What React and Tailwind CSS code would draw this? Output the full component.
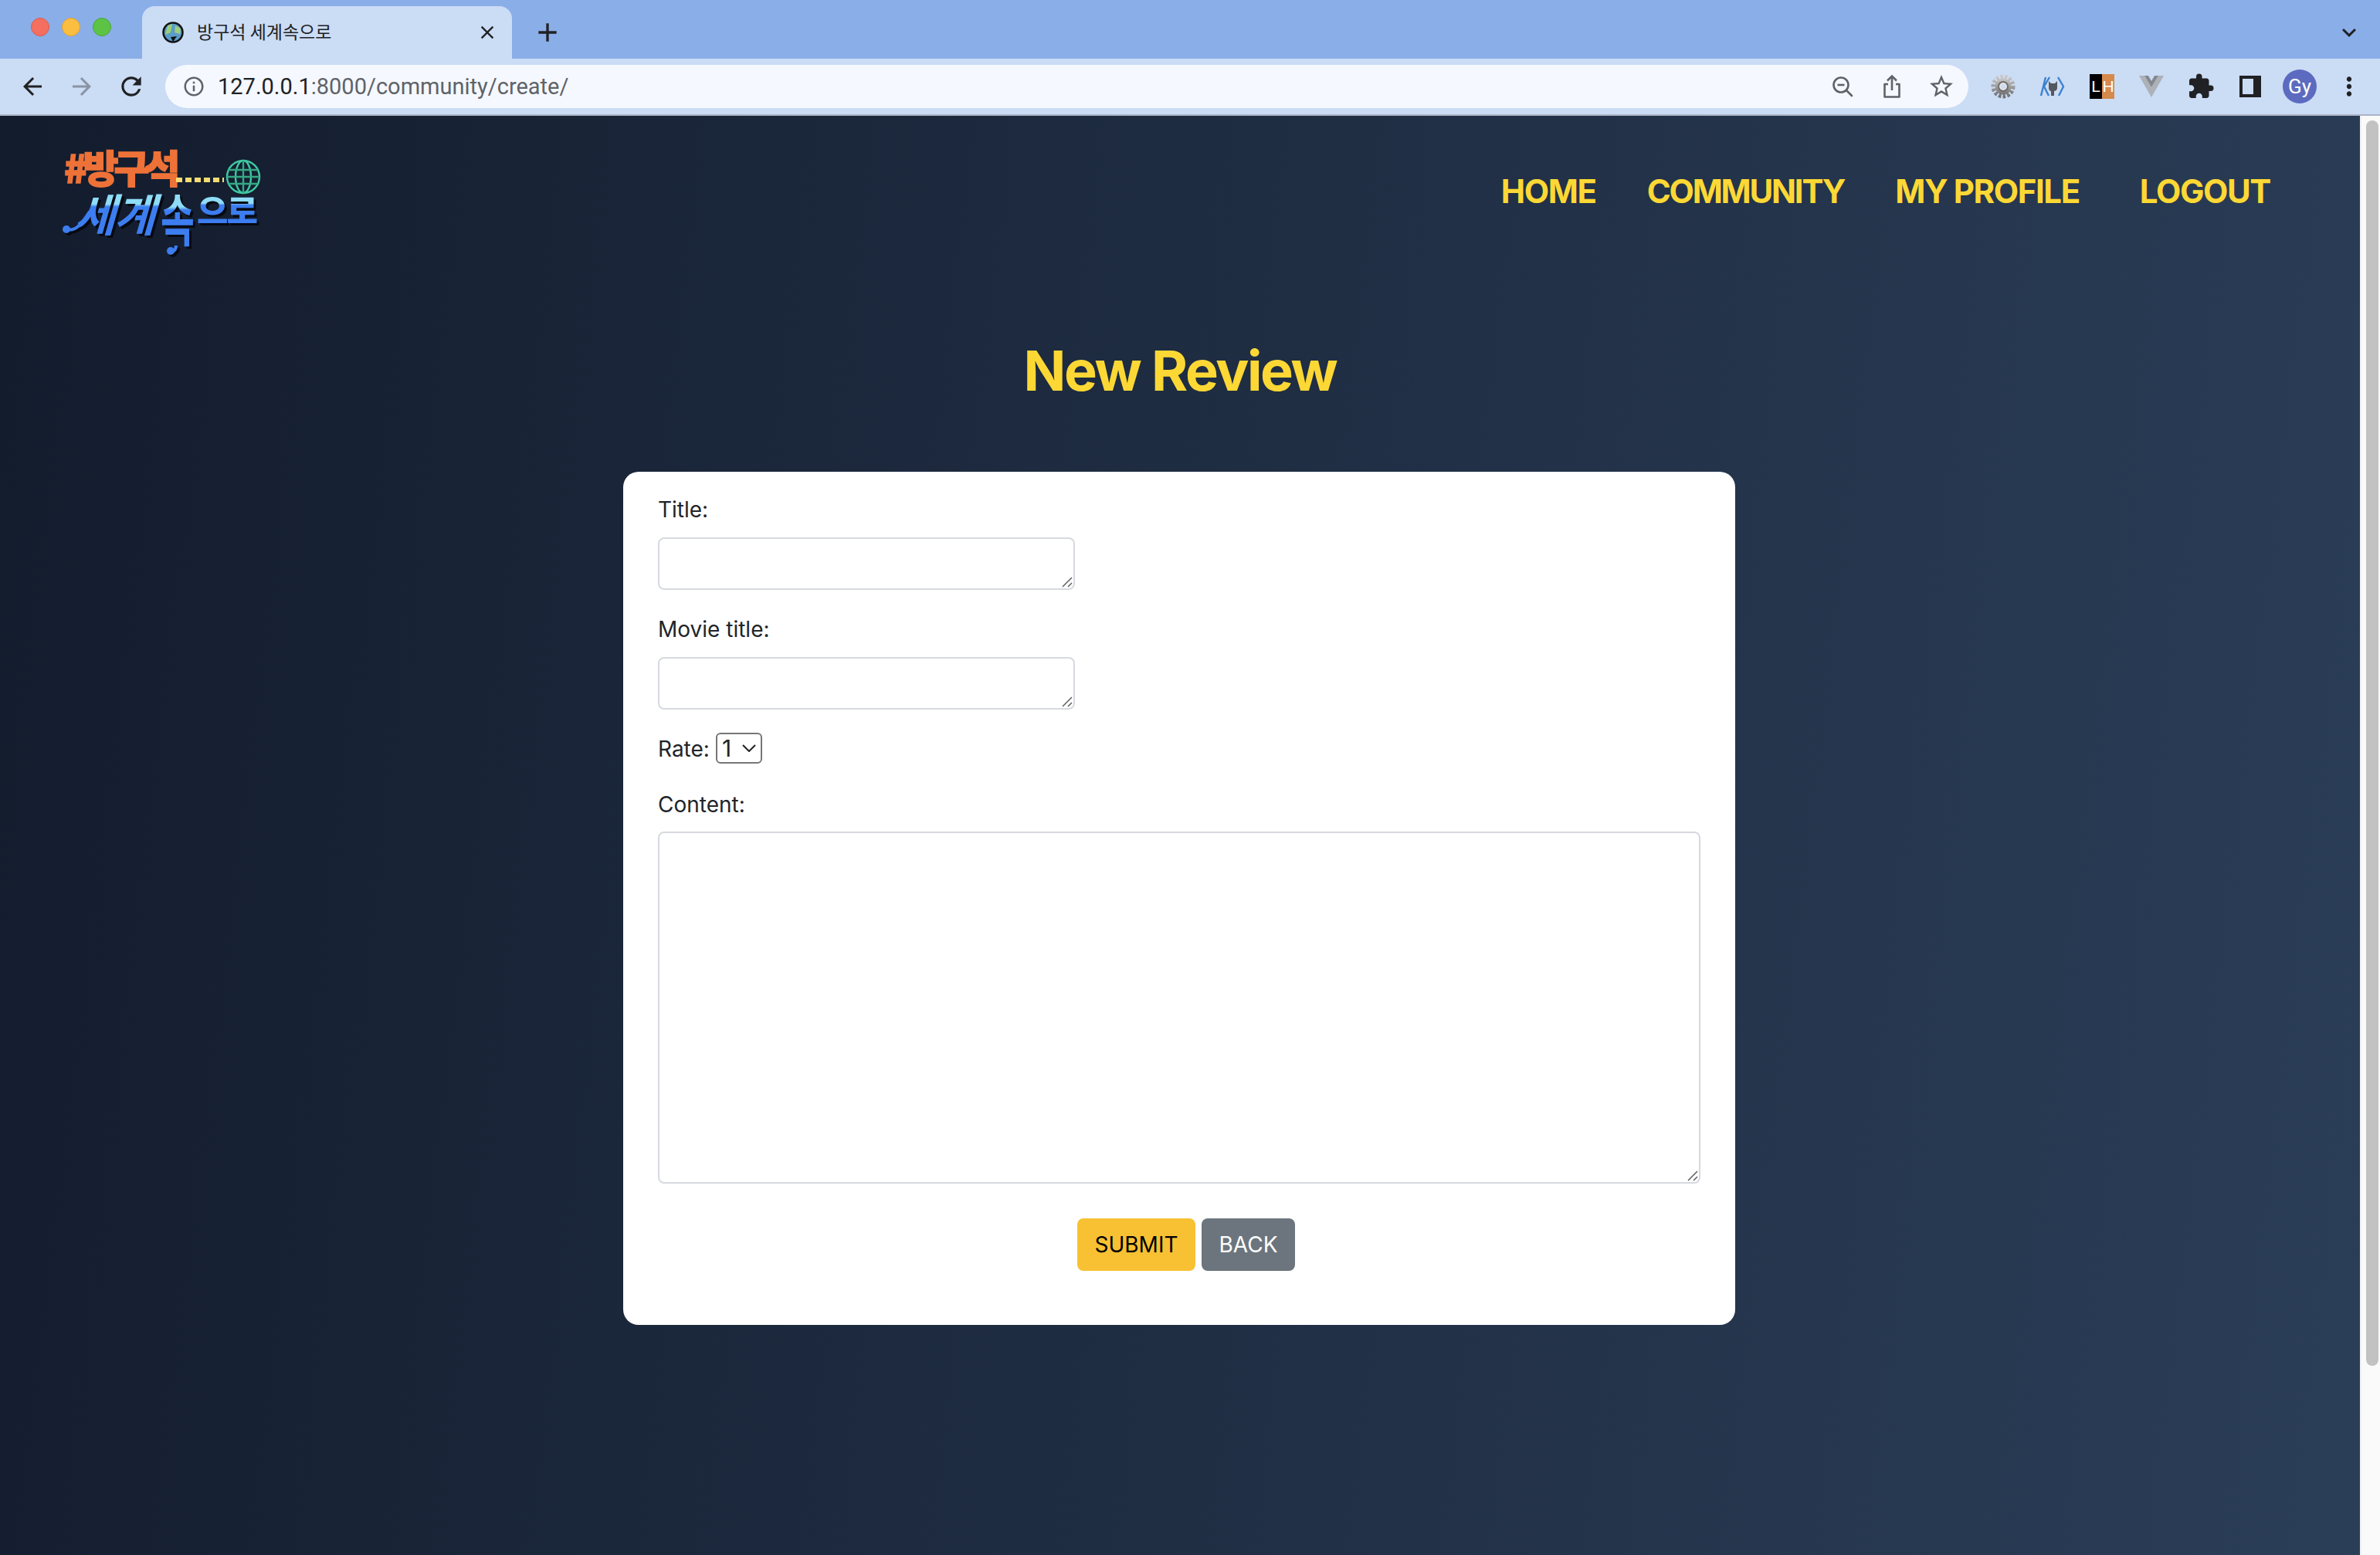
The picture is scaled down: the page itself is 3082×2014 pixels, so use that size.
import { MdArrowBack, MdArrowForward, MdRefresh, MdInfoOutline, MdClose, MdAdd, MdStarBorder, MdExtension, MdMoreVert, MdKeyboardArrowDown } from 'react-icons/md';

const navLinks = [
	{ label: 'HOME', className: 'mr-[66px]' },
	{ label: 'COMMUNITY', className: 'mr-[66px] tracking-[-2.2px]' },
	{ label: 'MY PROFILE', className: 'mr-[78px]' },
	{ label: 'LOGOUT', className: '' },
];

const Favicon = () => (
	<svg width="30" height="30" viewBox="0 0 30 30">
		<circle cx="15" cy="15" r="12.5" fill="#5b9cc9" stroke="#111" strokeWidth="2.5" />
		<path d="M8 6 L14 4 L12 15 L5 18 Z" fill="#9ccf7a" />
		<path d="M18 6 L25 10 L24 17 L17 15 Z" fill="#9ccf7a" />
		<path d="M12 21 L20 20 L15 27 Z" fill="#111" />
	</svg>
);

const ZoomOutIcon = () => (
	<svg width="30" height="30" viewBox="0 0 30 30" fill="none" stroke="#5f6368" strokeWidth="2.6">
		<circle cx="13" cy="13" r="9.5" />
		<path d="M8.5 13H17.5" />
		<path d="M20 20L27 27" strokeLinecap="round" />
	</svg>
);

const ShareIcon = () => (
	<svg width="26" height="32" viewBox="0 0 26 32" fill="none" stroke="#5f6368" strokeWidth="2.6">
		<path d="M13 21V3M7 8.5L13 2.5L19 8.5" />
		<path d="M8 13H3.5V29.5H22.5V13H18" strokeLinejoin="round" />
	</svg>
);

const GearIcon = () => (
	<svg width="32" height="32" viewBox="0 0 32 32">
		<defs>
			<linearGradient id="gear" x1="0" y1="0" x2="0" y2="1">
				<stop offset="0" stopColor="#c9c9c9" />
				<stop offset="1" stopColor="#737373" />
			</linearGradient>
		</defs>
		<circle cx="16" cy="16" r="12.5" fill="none" stroke="url(#gear)" strokeWidth="6" strokeDasharray="3.4 2.1" />
		<circle cx="16" cy="16" r="10.5" fill="url(#gear)" />
		<circle cx="16" cy="16" r="6" fill="#e4e4e4" stroke="#6d6d6d" strokeWidth="2" />
		<circle cx="16" cy="16" r="3" fill="#cbdcf5" />
	</svg>
);

const OctoIcon = () => (
	<svg width="34" height="32" viewBox="0 0 34 32" fill="none">
		<path d="M8 4L2 28M13 4L6 16L12 28M24 4L31 16L25 28" stroke="#3d82cf" strokeWidth="2.4" />
		<path d="M12 9L15 12H20L23 9V18C23 21 20 22 19 22V28H15V22C14 22 12 21 12 18Z" fill="#55585e" />
	</svg>
);

const LighthouseIcon = () => (
	<div className="flex w-[32px] h-[32px] text-[21px] leading-[32px] text-white text-center font-['Liberation_Sans',sans-serif]">
		<span className="w-[16px] bg-black">L</span>
		<span className="w-[16px] bg-[#d5894b]">H</span>
	</div>
);

const VueIcon = () => (
	<svg width="32" height="28" viewBox="0 0 32 28">
		<path d="M0 0H7L16 15L25 0H32L16 28Z" fill="#adb1b8" />
		<path d="M7 0H12L16 7L20 0H25L16 15Z" fill="#85888e" />
	</svg>
);

const SidePanelIcon = () => (
	<svg width="28" height="28" viewBox="0 0 28 28">
		<path d="M0 0H28V28H0ZM4 4V24H18V4Z" fill="#202124" fillRule="evenodd" />
	</svg>
);

// Logo: lettering stays real text, only globe, dots and swashes are drawn.
const Logo = () => (
	<svg width="270" height="140" viewBox="0 0 270 140" className="overflow-visible">
		<defs>
			<linearGradient id="logoBlue" x1="0" y1="0" x2="0" y2="1">
				<stop offset="0" stopColor="#8fdcf8" />
				<stop offset="0.38" stopColor="#8fdcf8" />
				<stop offset="0.42" stopColor="#3c7df0" />
				<stop offset="1" stopColor="#3c7df0" />
			</linearGradient>
		</defs>
		<text x="3" y="47" fontSize="50" fontWeight="900" fill="#ee7238" stroke="#ee7238" strokeWidth="1.5" letterSpacing="-6" fontFamily="'Noto Sans CJK KR', sans-serif">#방구석</text>
		<path d="M148 43H210" stroke="#f5dc72" strokeWidth="6" strokeDasharray="8 4" />
		<g fill="none" strokeWidth="2.4">
			<circle cx="235" cy="39" r="21" stroke="#3fc9a3" />
			<ellipse cx="235" cy="39" rx="10" ry="21" stroke="#3fc9a3" />
			<path d="M235 18V60M216 30H254M216 48H254M214 39H256" stroke="#35a884" />
		</g>
		<g className="drop-shadow-[3px_3px_0_#070a12]" fontWeight="700" fontFamily="'Noto Sans CJK KR', sans-serif" fill="url(#logoBlue)">
			<path d="M6 106C16 112 26 100 36 84" stroke="#3c7df0" strokeWidth="4" fill="none" />
			<circle cx="6" cy="107" r="5" fill="#3c7df0" />
			<text transform="translate(16 110) skewX(-16)" fontSize="58" letterSpacing="-2">세계</text>
			<text transform="translate(128 122) scale(0.85 1.3)" fontSize="56">속</text>
			<path d="M148 128C148 134 143 138 141 135" stroke="#3c7df0" strokeWidth="4" fill="none" />
			<circle cx="141" cy="135" r="5" fill="#3c7df0" />
			<text transform="translate(175 99) scale(1 0.95)" fontSize="44" fontWeight="900" letterSpacing="-2">으로</text>
		</g>
	</svg>
);

const ResizeGrip = () => (
	<svg width="14" height="14" viewBox="0 0 14 14" className="absolute right-[3px] bottom-[3px]" stroke="#5f5f5f" strokeWidth="1.5">
		<path d="M1 13L13 1M8 13L13 8" />
	</svg>
);

const TextBox = ({ className }) => (
	<div className={`relative ${className}`}>
		<textarea className="block w-full h-full resize-none border-2 border-[#d6d9df] rounded-[8px]" />
		<ResizeGrip />
	</div>
);

const Field = ({ label, children, className, labelClassName = 'mb-[18px]' }) => (
	<div className={className}>
		<label className={`block leading-[36px] h-[36px] ${labelClassName}`}>{label}</label>
		{children}
	</div>
);

const App = () => {
	return (
		<div className="w-[3082px] h-[2014px] overflow-hidden flex flex-col font-['Inter',sans-serif] text-[#212529]">
			{/* tab strip */}
			<div className="h-[76px] bg-[#8aaee8] flex items-end shrink-0">
				<div className="w-[184px] h-full flex items-center pl-[40px] gap-[16px] pb-[6px]">
					<span className="w-[24px] h-[24px] rounded-full bg-[#f46f60] border border-[#dc5a4c]" />
					<span className="w-[24px] h-[24px] rounded-full bg-[#fbbe40] border border-[#dea234]" />
					<span className="w-[24px] h-[24px] rounded-full bg-[#5cc345] border border-[#4aa83a]" />
				</div>
				<div className="w-[479px] h-[68px] bg-[#cbdcf5] rounded-t-[16px] flex items-center pl-[25px] pr-[18px]">
					<Favicon />
					<span className="ml-[16px] mb-[3px] text-[23px] text-[#202124] font-['Noto_Sans_CJK_KR',sans-serif] flex-1">방구석 세계속으로</span>
					<MdClose size={28} color="#202124" />
				</div>
				<div className="h-[68px] ml-[26px] flex items-center">
					<MdAdd size={40} color="#202124" />
				</div>
				<div className="flex-1" />
				<div className="h-full flex items-center pr-[22px] pt-[8px]">
					<MdKeyboardArrowDown size={36} color="#202124" />
				</div>
			</div>
			{/* toolbar */}
			<div className="h-[74px] bg-[#cbdcf5] border-b-2 border-[#adb5c6] flex items-center shrink-0">
				<div className="w-[214px] flex items-center pl-[10px]">
					<span className="w-[64px] flex justify-center"><MdArrowBack size={36} color="#202124" /></span>
					<span className="w-[64px] flex justify-center"><MdArrowForward size={36} color="#8a93a3" /></span>
					<span className="w-[64px] flex justify-center"><MdRefresh size={38} color="#202124" /></span>
				</div>
				<div className="w-[2335px] h-[56px] bg-[#f5f8fe] rounded-full flex items-center pl-[22px] pr-[3px]">
					<MdInfoOutline size={30} color="#5f6368" />
					<span className="ml-[16px] pt-[2px] text-[29px] text-[#202124] font-['Roboto',sans-serif]">127.0.0.1<span className="text-[#5f6368]">:8000/community/create/</span></span>
					<div className="flex-1" />
					<span className="w-[64px] flex justify-center"><ZoomOutIcon /></span>
					<span className="w-[64px] flex justify-center"><ShareIcon /></span>
					<span className="w-[64px] flex justify-center"><MdStarBorder size={36} color="#5f6368" /></span>
				</div>
				<div className="flex items-center pl-[13px]">
					<span className="w-[64px] flex justify-center"><GearIcon /></span>
					<span className="w-[64px] flex justify-center"><OctoIcon /></span>
					<span className="w-[64px] flex justify-center"><LighthouseIcon /></span>
					<span className="w-[64px] flex justify-center"><VueIcon /></span>
					<span className="w-[64px] flex justify-center"><MdExtension size={36} color="#202124" /></span>
					<span className="w-[64px] flex justify-center"><SidePanelIcon /></span>
					<span className="w-[64px] flex justify-center">
						<span className="w-[44px] h-[44px] rounded-full bg-[#5c6bc0] text-white text-[26px] leading-[44px] text-center font-['Roboto',sans-serif]">Gy</span>
					</span>
					<span className="w-[64px] flex justify-center"><MdMoreVert size={38} color="#202124" /></span>
				</div>
			</div>
			{/* page */}
			<div className="flex-1 flex min-h-0">
				<main className="w-[3056px] bg-[linear-gradient(97deg,#131c2d,#2b3e58)] flex flex-col">
					<nav className="h-[150px] flex pl-[80px] pr-[116px] shrink-0">
						<div className="pt-[40px]"><Logo /></div>
						<div className="flex-1" />
						<div className="flex items-start pt-[74px] text-[42px] leading-[48px] font-bold text-[#fdd835] tracking-[-1.4px]">
							{navLinks.map((link) => (
								<a key={link.label} className={link.className}>{link.label}</a>
							))}
						</div>
					</nav>
					<h1 className="mt-[124px] text-center text-[72px] leading-[112px] font-bold text-[#fdd835] tracking-[-2.4px]">New Review</h1>
					<form className="mt-[75px] ml-[807px] w-[1440px] h-[1105px] bg-white rounded-[20px] px-[45px] pt-[31px] text-[28px]">
						<Field label="Title:" className="mb-[33px]">
							<TextBox className="w-[540px] h-[68px]" />
						</Field>
						<Field label="Movie title:" className="mb-[30px]">
							<TextBox className="w-[540px] h-[68px]" />
						</Field>
						<div className="h-[40px] flex items-center mb-[35px]">
							<label className="pt-[1px]">Rate:</label>
							<div className="relative ml-[8px]">
								<select className="block appearance-none w-[60px] h-[40px] border-2 border-[#767676] rounded-[6px] text-[30px] leading-[36px] pl-[6px]">
									<option>1</option>
								</select>
								<svg width="18" height="10" viewBox="0 0 18 10" className="absolute right-[8px] top-[15px]" fill="none" stroke="#222" strokeWidth="2">
									<path d="M1 1L9 9L17 1" />
								</svg>
							</div>
						</div>
						<Field label="Content:" className="mb-[45px]" labelClassName="mb-[17px]">
							<TextBox className="w-[1350px] h-[456px]" />
						</Field>
						<div className="flex justify-center gap-[8px] pl-[18px]">
							<button type="button" className="w-[153px] h-[68px] bg-[#f8c133] text-black rounded-[8px]">SUBMIT</button>
							<button type="button" className="w-[121px] h-[68px] bg-[#6c757d] text-white rounded-[8px]">BACK</button>
						</div>
					</form>
				</main>
				{/* scrollbar */}
				<div className="flex-1 bg-[#fafafa] border-l-2 border-[#f0f0f0] pt-[6px] pl-[6px]">
					<div className="w-[16px] h-[1613px] rounded-full bg-[#c2c2c2]" />
				</div>
			</div>
		</div>
	);
};

export default App;
